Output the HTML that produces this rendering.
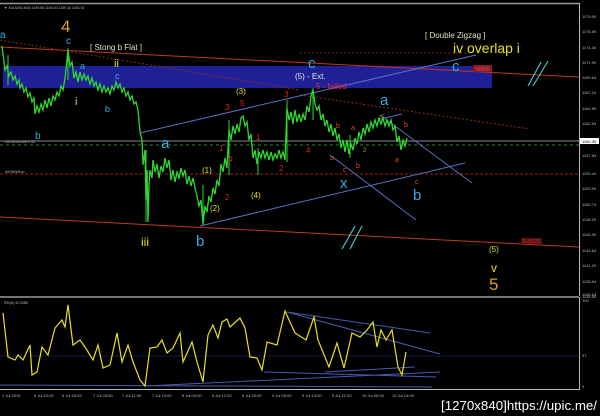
<!DOCTYPE html>
<html><head><meta charset="utf-8"><style>
html,body{margin:0;padding:0;background:#000;width:600px;height:416px;overflow:hidden}
svg{display:block}
text{font-family:"Liberation Sans",sans-serif}
</style></head><body>
<svg width="600" height="416" viewBox="0 0 600 416" xmlns="http://www.w3.org/2000/svg">
<rect width="600" height="416" fill="#000"/>
<line x1="0" y1="3.5" x2="579" y2="3.5" stroke="#9a9a9a" stroke-width="1.5"/>
<text x="4" y="9" font-size="3.5" fill="#bbb">▼ XAUUSD,M30  1159.85 1160.00 1159.40 1160.15</text>
<rect x="3" y="66" width="489" height="22" fill="#1f1f96"/>
<line x1="0" y1="47" x2="579" y2="77" stroke="#c0381a" stroke-width="1"/>
<line x1="0" y1="40" x2="300" y2="90" stroke="#8a2a1a" stroke-width="1" stroke-dasharray="2,2"/>
<line x1="300" y1="95" x2="530" y2="129" stroke="#8a2a1a" stroke-width="1" stroke-dasharray="2,2"/>
<line x1="300" y1="53" x2="470" y2="53" stroke="#6a1f1a" stroke-width="1" stroke-dasharray="2,2"/>
<line x1="0" y1="217" x2="579" y2="247" stroke="#c0381a" stroke-width="1"/>
<line x1="0" y1="174" x2="579" y2="174" stroke="#a01a1a" stroke-width="1" stroke-dasharray="3,2"/>
<line x1="0" y1="141" x2="579" y2="141" stroke="#8a8a8a" stroke-width="1"/>
<line x1="0" y1="145" x2="579" y2="145" stroke="#2a8a2a" stroke-width="1" stroke-dasharray="3,3"/>
<text x="5" y="143" font-size="3.5" fill="#bbb">#0296406 sell 0.50</text>
<text x="5" y="173" font-size="3.5" fill="#bbb">#0296406 tp</text>
<g stroke="#5a70c0" stroke-width="1">
<line x1="140" y1="133" x2="476" y2="55"/>
<line x1="200" y1="226" x2="465" y2="163"/>
<line x1="380" y1="115" x2="472" y2="183"/>
<line x1="330" y1="155" x2="416" y2="220"/>
<line x1="380" y1="119" x2="402" y2="114"/>
</g>
<polyline fill="none" stroke="#2fd82f" stroke-width="1.3" points="2,46 4,62 5,70 7,66 9,76 11,72 13,80 15,76 17,84 19,80 20,88 22,84 24,92 26,88 28,97 30,93 32,102 34,98 35,114 37,106 39,112 41,104 43,110 45,100 47,108 49,98 51,106 53,96 55,100 57,92 59,96 61,86 63,90 65,78 67,60 68,50 70,66 72,62 74,78 76,72 78,82 80,72 82,80 84,74 86,80 88,76 90,84 92,78 94,86 96,82 98,90 100,84 102,92 104,86 106,92 108,88 110,94 112,86 114,90 116,82 118,88 120,84 122,92 124,88 126,96 128,92 130,100 132,96 134,104 136,102 138,110 140,132 142,140 143,165 145,150 146,200 147,170 148,222 149,185 150,170 152,178 153,160 155,172 157,164 159,178 161,166 163,172 165,158 167,168 169,160 171,180 173,170 175,182 177,172 179,178 181,168 183,176 185,170 187,184 189,176 191,186 193,178 195,188 197,196 199,206 201,200 203,224 205,206 207,212 209,196 211,202 213,188 215,194 217,180 219,186 221,164 223,172 225,158 227,168 229,130 231,140 233,126 235,134 237,124 239,132 241,118 243,116 245,126 247,122 249,140 251,134 253,158 255,150 257,164 259,152 261,158 263,150 265,158 267,152 269,160 271,152 273,160 275,154 277,158 279,150 281,158 283,152 285,160 287,108 289,120 291,112 293,124 295,110 297,122 299,114 301,122 303,114 305,120 307,106 309,112 311,96 313,90 315,104 317,110 319,106 321,120 323,114 325,126 327,120 329,132 331,124 333,136 335,128 337,140 339,134 341,148 343,140 345,152 347,140 349,154 351,144 353,150 355,138 357,144 359,132 361,140 363,128 365,134 367,124 369,132 371,122 373,128 375,120 377,126 379,118 381,124 383,118 385,126 387,120 389,126 391,120 393,130 395,126 397,142 399,136 401,150 403,140 405,146 407,138"/>
<g stroke="#2fd82f" stroke-width="1">
<line x1="146" y1="150" x2="146" y2="222"/><line x1="203" y1="185" x2="203" y2="225"/><line x1="287" y1="100" x2="287" y2="162"/><line x1="313" y1="88" x2="313" y2="120"/><line x1="229" y1="120" x2="229" y2="175"/><line x1="68" y1="48" x2="68" y2="80"/><line x1="8" y1="55" x2="8" y2="85"/><line x1="258" y1="148" x2="258" y2="175"/><line x1="350" y1="135" x2="350" y2="158"/>
</g>
<g stroke="#40c8c8" stroke-width="1.2"><line x1="528" y1="86" x2="541" y2="62"/><line x1="533" y1="86" x2="548" y2="61"/><line x1="342" y1="249" x2="355" y2="226"/><line x1="350" y1="249" x2="362" y2="226"/></g>
<rect x="473" y="65" width="19" height="7" fill="#8a1a2a"/><text x="474" y="71" font-size="5" fill="#e05050">-Sl5F5-</text>
<rect x="521" y="238" width="21" height="6" fill="#5a1010"/><text x="522" y="243" font-size="5" fill="#c03030">1142.91</text>
<g font-size="17" fill="#e0a020"><text x="61" y="32">4</text><text x="489" y="290">5</text></g>
<g fill="#30b0e0">
<text x="66" y="44" font-size="10">c</text><text x="0" y="38" font-size="10">a</text>
<text x="80" y="69" font-size="9">a</text><text x="115" y="79" font-size="9">c</text>
<text x="105" y="112" font-size="9">b</text><text x="35" y="139" font-size="10">b</text>
<text x="161" y="148" font-size="15">a</text><text x="196" y="246" font-size="15">b</text>
<text x="308" y="68" font-size="15">c</text><text x="380" y="105" font-size="15">a</text>
<text x="452" y="71" font-size="15">c</text><text x="340" y="188" font-size="15">x</text>
<text x="413" y="200" font-size="15">b</text>
</g>
<g fill="#e0e020">
<text x="114" y="67" font-size="11">ii</text><text x="75" y="105" font-size="11">i</text>
<text x="141" y="246" font-size="12">iii</text><text x="491" y="272" font-size="12">v</text>
<text x="236" y="94" font-size="8">(3)</text><text x="202" y="173" font-size="8">(1)</text>
<text x="210" y="211" font-size="8">(2)</text><text x="251" y="198" font-size="8">(4)</text>
<text x="489" y="252" font-size="8">(5)</text>
<text x="453" y="53" font-size="14">iv overlap i</text>
</g>
<text x="295" y="79" font-size="8" fill="#e8e8e8">(5) - Ext.</text>
<text x="316" y="89" font-size="8" fill="#e0304a">5 - failed</text>
<text x="90" y="50" font-size="8" fill="#e0e0c0">[ Stong b Flat ]</text>
<text x="425" y="38" font-size="8" fill="#e0e0c0">[ Double Zigzag ]</text>
<g font-size="8" fill="#e02020">
<text x="225" y="110">3</text><text x="240" y="106">5</text><text x="284" y="97">3</text>
<text x="219" y="151">1</text><text x="228" y="162">4</text><text x="225" y="200">2</text>
<text x="256" y="140">1</text><text x="279" y="171">2</text><text x="306" y="153">4</text>
</g>
<g font-size="7" fill="#e05020">
<text x="336" y="128">b</text><text x="351" y="130">a</text><text x="381" y="118">c</text>
<text x="404" y="127">b</text><text x="330" y="160">a</text><text x="343" y="172">c</text>
<text x="356" y="168">b</text><text x="395" y="162">a</text><text x="415" y="184">c</text>
</g>
<text x="363" y="152" font-size="6" fill="#d09030">2</text>
<line x1="579.5" y1="3" x2="579.5" y2="296" stroke="#bbb" stroke-width="1"/>
<g font-size="4" fill="#bbb">
<text x="582" y="18">1179.09</text><text x="582" y="33">1176.69</text><text x="582" y="49">1174.34</text><text x="582" y="64">1171.99</text><text x="582" y="79">1169.64</text><text x="582" y="94">1167.24</text><text x="582" y="110">1164.89</text><text x="582" y="125">1162.54</text><text x="582" y="157">1157.84</text><text x="582" y="175">1155.44</text><text x="582" y="190">1153.09</text><text x="582" y="206">1150.74</text><text x="582" y="221">1148.29</text><text x="582" y="236">1145.99</text><text x="582" y="252">1143.64</text><text x="582" y="267">1141.29</text><text x="582" y="283">1138.94</text><text x="582" y="298">1136.54</text>
</g>
<rect x="580" y="138" width="19" height="6" fill="#fff"/><text x="582" y="143" font-size="4" fill="#000">1160.35</text>
<line x1="0" y1="297" x2="579" y2="297" stroke="#9a9a9a" stroke-width="1.5"/>
<text x="4" y="304" font-size="3.5" fill="#bbb">RSI(5) 41.0088</text>
<line x1="0" y1="356" x2="579" y2="356" stroke="#1a1a50" stroke-width="1"/>
<g stroke="#4a5ab0" stroke-width="1">
<line x1="0" y1="385" x2="432" y2="387"/>
<line x1="145" y1="386" x2="440" y2="372"/>
<line x1="287" y1="312" x2="430" y2="333"/>
<line x1="287" y1="312" x2="440" y2="354"/>
<line x1="264" y1="372" x2="436" y2="377"/>
<line x1="325" y1="372" x2="415" y2="367"/>
</g>
<polyline fill="none" stroke="#e8e020" stroke-width="1.2" points="3,313 8,357 15,360 18,355 23,360 30,345 32,375 37,372 42,347 48,355 55,328 62,320 65,327 68,305 73,345 80,340 85,347 93,360 98,345 103,368 110,365 117,333 122,362 128,345 133,362 140,380 145,386 150,348 157,347 162,340 167,353 173,348 180,333 183,362 192,342 197,362 203,382 208,335 213,325 218,338 222,322 227,319 230,327 240,318 245,328 250,357 257,358 262,370 267,342 277,345 285,311 295,333 306,340 314,317 318,340 329,367 337,343 344,368 352,333 360,337 367,330 373,322 377,347 381,330 386,340 392,330 398,367 402,375 406,352"/>
<line x1="579.5" y1="297" x2="579.5" y2="390" stroke="#bbb"/>
<line x1="0" y1="389.5" x2="579" y2="389.5" stroke="#bbb"/>
<g font-size="4" fill="#bbb"><text x="582" y="302">100</text><text x="582" y="357">37</text><text x="582" y="388">0</text>
<text x="582" y="296">1136.54</text>
<text x="2" y="397">1 Jul 2015</text><text x="34" y="397">6 Jul 10:25</text><text x="62" y="397">6 Jul 18:25</text><text x="93" y="397">7 Jul 03:00</text><text x="122" y="397">7 Jul 11:00</text><text x="152" y="397">7 Jul 19:00</text><text x="182" y="397">8 Jul 04:00</text><text x="212" y="397">8 Jul 12:00</text><text x="242" y="397">8 Jul 20:00</text><text x="272" y="397">9 Jul 05:00</text><text x="302" y="397">9 Jul 13:00</text><text x="332" y="397">9 Jul 21:00</text><text x="362" y="397">10 Jul 06:00</text><text x="392" y="397">10 Jul 14:00</text></g>
<text x="441" y="410" font-size="13" fill="#fff" textLength="156" lengthAdjust="spacingAndGlyphs">[1270x840]https://upic.me/</text>
</svg>
</body></html>
